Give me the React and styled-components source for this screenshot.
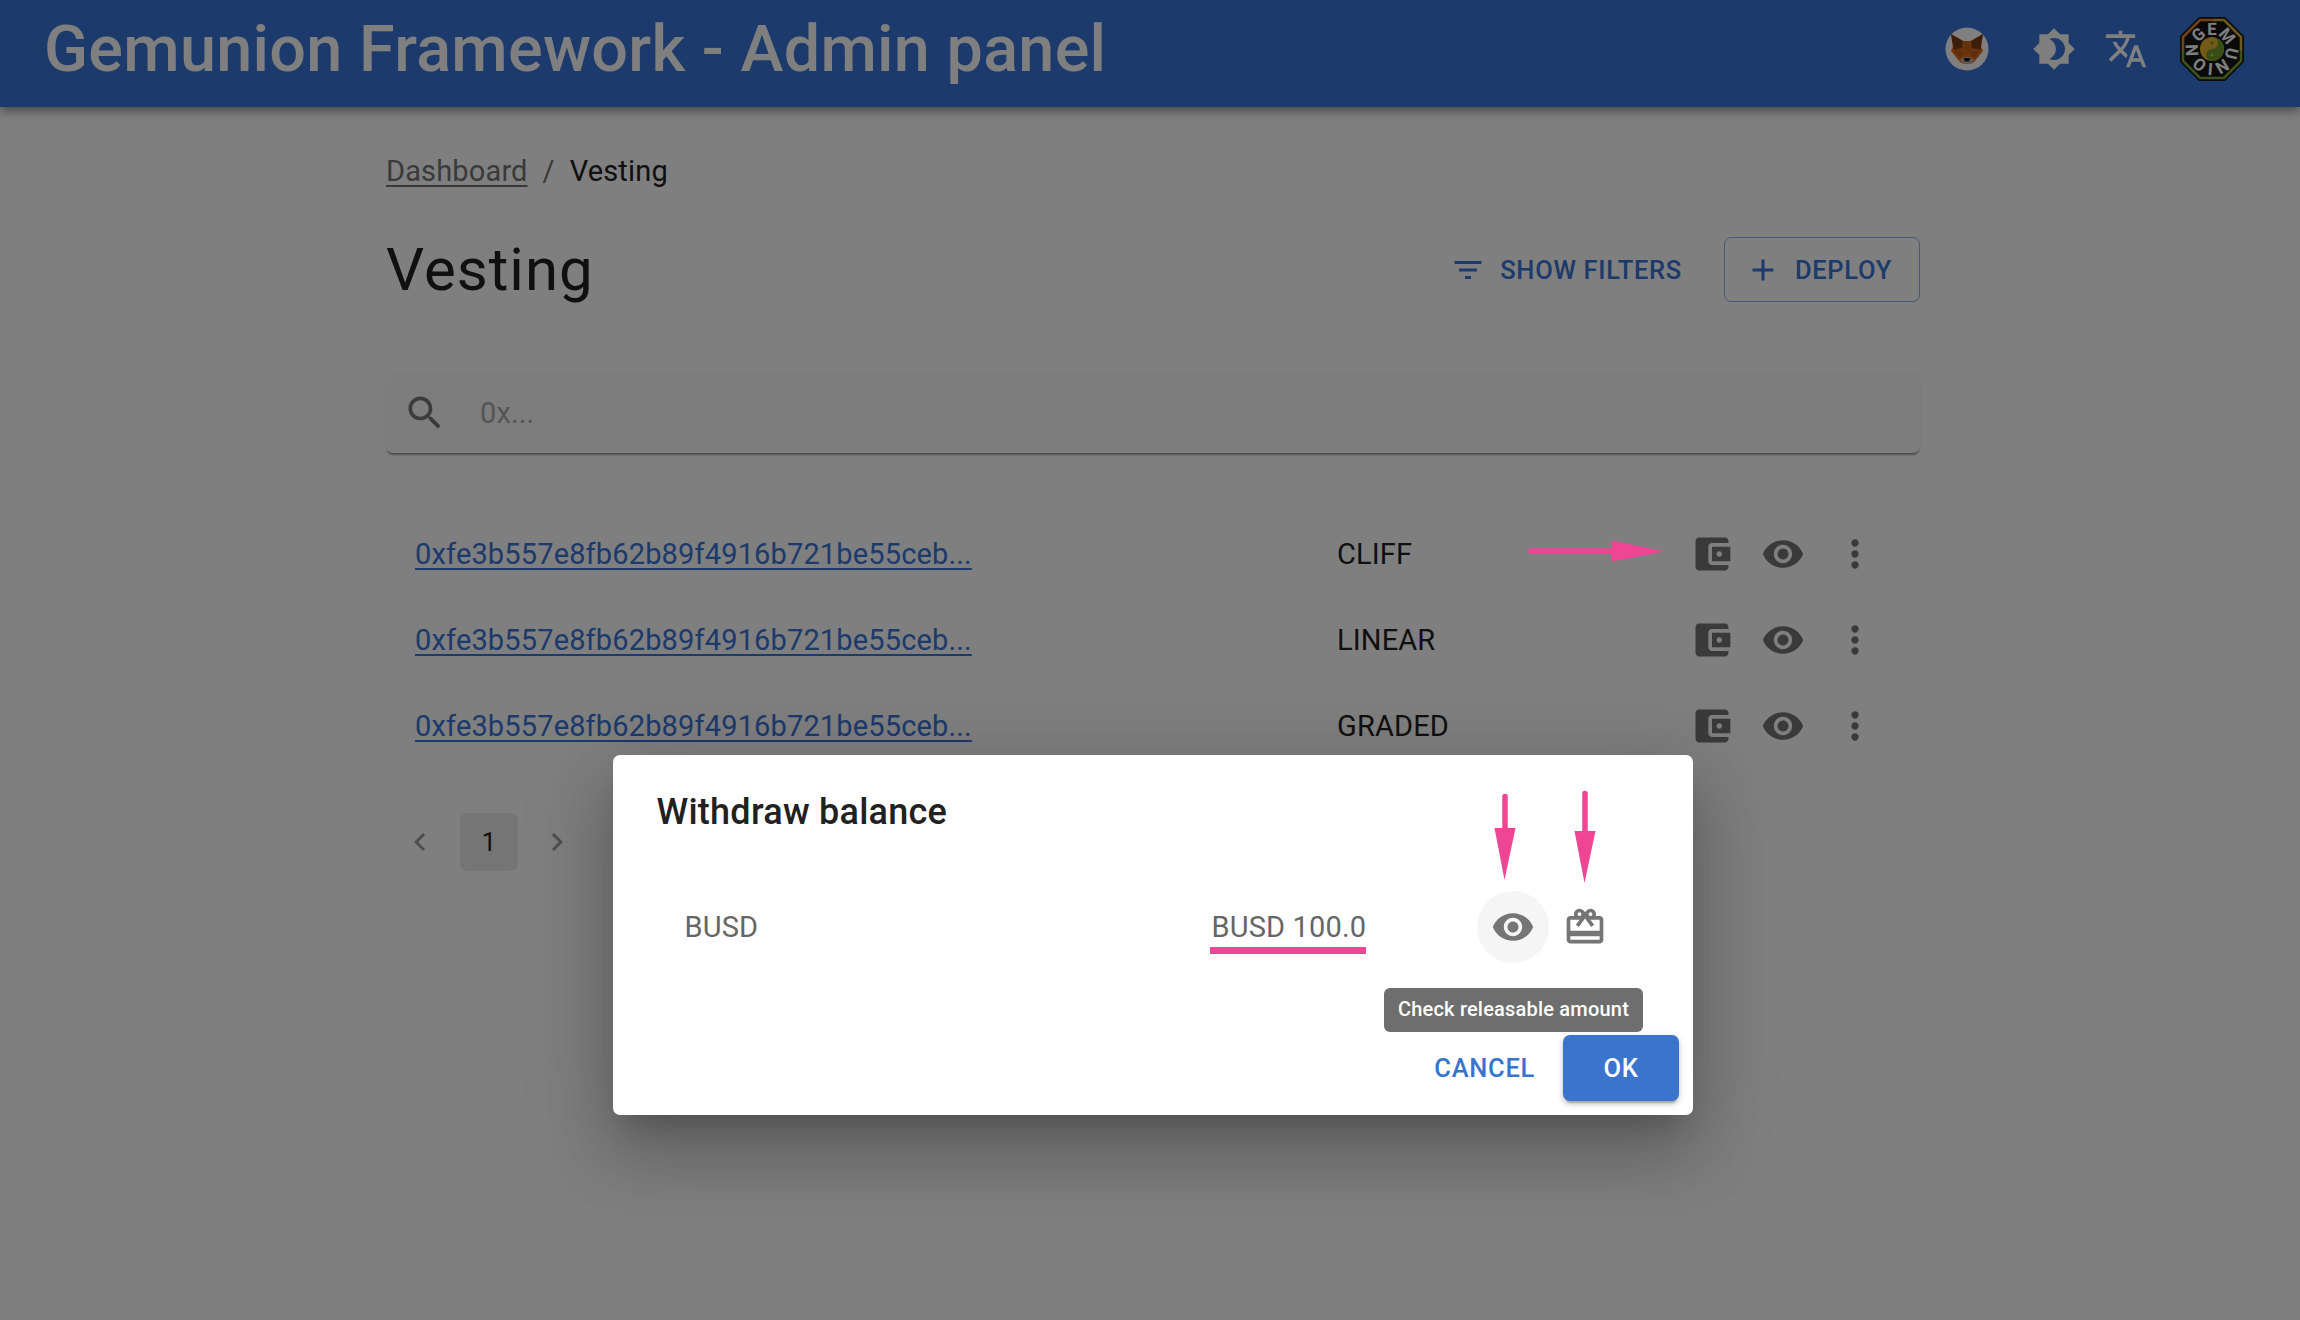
import React from "react";
import styled, { createGlobalStyle } from "styled-components";

const Global = createGlobalStyle`
  html, body { margin: 0; padding: 0; background: #fff; overflow: hidden; }
  body { font-family: Roboto, "Liberation Sans", sans-serif; width: 2300px; height: 1320px; }
  * { box-sizing: border-box; }
`;

const ICONS = {
  wallet: "M21 18v1c0 1.1-.9 2-2 2H5c-1.11 0-2-.9-2-2V5c0-1.1.89-2 2-2h14c1.1 0 2 .9 2 2v1h-9c-1.11 0-2 .9-2 2v8c0 1.1.89 2 2 2h9zm-9-2h10V8H12v8zm4-2.5c-.83 0-1.5-.67-1.5-1.5s.67-1.5 1.5-1.5 1.5.67 1.5 1.5-.67 1.5-1.5 1.5z",
  eye: "M12 4.5C7 4.5 2.73 7.61 1 12c1.73 4.39 6 7.5 11 7.5s9.27-3.11 11-7.5c-1.73-4.39-6-7.5-11-7.5zM12 17c-2.76 0-5-2.24-5-5s2.24-5 5-5 5 2.24 5 5-2.24 5-5 5zm0-8c-1.66 0-3 1.34-3 3s1.34 3 3 3 3-1.34 3-3-1.34-3-3-3z",
  more: "M12 8c1.1 0 2-.9 2-2s-.9-2-2-2-2 .9-2 2 .9 2 2 2zm0 2c-1.1 0-2 .9-2 2s.9 2 2 2 2-.9 2-2-.9-2-2-2zm0 6c-1.1 0-2 .9-2 2s.9 2 2 2 2-.9 2-2-.9-2-2-2z",
  gift: "M20 6h-2.18c.11-.31.18-.65.18-1 0-1.66-1.34-3-3-3-1.05 0-1.96.54-2.5 1.35l-.5.67-.5-.68C10.96 2.54 10.05 2 9 2 7.34 2 6 3.34 6 5c0 .35.07.69.18 1H4c-1.11 0-1.99.89-1.99 2L2 19c0 1.11.89 2 2 2h16c1.11 0 2-.89 2-2V8c0-1.11-.89-2-2-2zm-5-2c.55 0 1 .45 1 1s-.45 1-1 1-1-.45-1-1 .45-1 1-1zM9 4c.55 0 1 .45 1 1s-.45 1-1 1-1-.45-1-1 .45-1 1-1zm11 15H4v-2h16v2zm0-5H4V8h5.08L7 10.83 8.62 12 11 8.76l1-1.36 1 1.36L15.38 12 17 10.83 14.92 8H20v6z",
  theme: "M20 8.69V4h-4.69L12 .69 8.69 4H4v4.69L.69 12 4 15.31V20h4.69L12 23.31 15.31 20H20v-4.69L23.31 12 20 8.69zM12 18c-.89 0-1.74-.2-2.5-.55C11.56 16.5 13 14.42 13 12s-1.44-4.5-3.5-5.45C10.26 6.2 11.11 6 12 6c3.31 0 6 2.69 6 6s-2.69 6-6 6z",
  translate: "M12.87 15.07l-2.54-2.51.03-.03c1.74-1.94 2.98-4.17 3.64-6.53H17V4h-7V2H8v2H1v1.99h11.17C11.5 7.92 10.44 9.75 9 11.35 8.07 10.32 7.3 9.19 6.69 8h-2c.73 1.63 1.73 3.17 2.98 4.56l-5.09 5.02L4 19l5-5 3.11 3.11.76-2.04zM18.5 10h-2L12 22h2l1.12-3h4.75L21 22h2l-4.5-12zm-2.62 7l1.62-4.33L19.12 17h-3.24z",
  search: "M15.5 14h-.79l-.28-.27C15.41 12.59 16 11.11 16 9.5 16 5.91 13.09 3 9.5 3S3 5.91 3 9.5 5.91 16 9.5 16c1.61 0 3.09-.59 4.23-1.57l.27.28v.79l5 4.99L20.49 19l-4.99-5zm-6 0C7.01 14 5 11.99 5 9.5S7.01 5 9.5 5 14 7.01 14 9.5 11.99 14 9.5 14z",
  filter: "M10 18h4v-2h-4v2zM3 6v2h18V6H3zm3 7h12v-2H6v2z",
  plus: "M19 13h-6v6h-2v-6H5v-2h6V5h2v6h6v2z",
  left: "M15.41 7.41 14 6l-6 6 6 6 1.41-1.41L10.83 12z",
  right: "M10 6 8.59 7.41 13.17 12l-4.58 4.59L10 18l6-6z",
};

const Svg = styled.svg`
  display: block;
  flex: none;
  width: ${(p) => p.$size || 44}px;
  height: ${(p) => p.$size || 44}px;
  fill: currentColor;
`;
const Icon = ({ name, size }) => (
  <Svg viewBox="0 0 24 24" $size={size}>
    <path d={ICONS[name]} />
  </Svg>
);

const Page = styled.div`
  position: relative;
  width: 2300px;
  height: 1320px;
  background: #fff;
  overflow: hidden;
`;
const AppBar = styled.header`
  display: flex;
  align-items: center;
  height: 107px;
  padding: 0 38px 9px 44px;
  background: #3874d6;
  color: #fff;
  box-shadow: 0 4px 8px -1px rgba(0, 0, 0, 0.3), 0 7px 10px 0 rgba(0, 0, 0, 0.14);
`;
const AppTitle = styled.h1`
  flex: 1;
  margin: 0;
  font-size: 64.7px;
  font-weight: 500;
  line-height: 96px;
  letter-spacing: 0.3px;
`;
const AppActions = styled.div`
  display: flex;
  align-items: center;
`;
const BarSlot = styled.div`
  display: flex;
  align-items: center;
  justify-content: center;
  width: ${(p) => p.$w}px;
  margin-left: ${(p) => p.$gap || 0}px;
`;

const Content = styled.main`
  width: 1534px;
  margin-left: 386px;
`;
const Breadcrumbs = styled.nav`
  display: flex;
  align-items: center;
  gap: 15px;
  height: 44px;
  margin-top: 42px;
  font-size: 29px;
  letter-spacing: 0.15px;
  color: #212121;
`;
const Crumb = styled.a`
  color: #757575;
  text-decoration: underline;
  text-underline-offset: 4px;
  text-decoration-thickness: 2px;
`;
const Sep = styled.span`
  color: #757575;
`;
const Header = styled.div`
  display: flex;
  align-items: center;
  height: 65px;
  margin-top: 44px;
`;
const PageTitle = styled.h2`
  flex: 1;
  margin: 0;
  font-size: 60px;
  font-weight: 400;
  line-height: 65px;
  letter-spacing: 1px;
  color: #212121;
`;
const TextButton = styled.button`
  display: flex;
  align-items: center;
  gap: 14px;
  height: 65px;
  border: 1.5px solid ${(p) => (p.$outlined ? "#8db0e8" : "transparent")};
  border-radius: 7px;
  background: none;
  padding: 0 ${(p) => (p.$outlined ? 27 : 28)}px 0 ${(p) => (p.$outlined ? 20 : 28)}px;
  margin-left: ${(p) => (p.$outlined ? 13 : 0)}px;
  color: #3874d6;
  font: 500 25.5px Roboto, sans-serif;
  letter-spacing: 0.7px;
  text-transform: uppercase;
`;
const Search = styled.div`
  display: flex;
  align-items: center;
  height: 80px;
  margin-top: 71px;
  padding-left: 17px;
  background: #fbfbfb;
  border-radius: 7px;
  box-shadow: 0 3px 2px -1px rgba(0, 0, 0, 0.4), 0 0 2px rgba(0, 0, 0, 0.05);
  color: #777;
`;
const SearchText = styled.span`
  margin-left: 33px;
  font-size: 29px;
  color: #aaa;
  letter-spacing: 0.15px;
`;
const Rows = styled.div`
  margin-top: 58px;
`;
const Row = styled.div`
  display: flex;
  align-items: center;
  height: 86px;
  padding-left: 29px;
  font-size: 29px;
  letter-spacing: 0.15px;
  color: #212121;
`;
const RowLink = styled.a`
  width: 922px;
  color: #3874d6;
  text-decoration: underline;
  text-underline-offset: 4px;
  text-decoration-thickness: 2px;
`;
const RowType = styled.span`
  width: 339px;
`;
const IconBtn = styled.span`
  display: flex;
  align-items: center;
  justify-content: center;
  width: 72px;
  height: 72px;
  border-radius: 50%;
  color: #757575;
  background: ${(p) => (p.$active ? "#f5f5f5" : "transparent")};
  margin-right: ${(p) => (p.$tight ? -0.7 : 0)}px;
`;
const Pager = styled.div`
  display: flex;
  align-items: center;
  gap: 11px;
  margin: 43.5px 0 0 5px;
`;
const PagerItem = styled.span`
  display: flex;
  align-items: center;
  justify-content: center;
  width: 58px;
  height: 58px;
  border-radius: 7px;
  font-size: 25.5px;
  color: #212121;
  background: ${(p) => (p.$active ? "#ebebeb" : "transparent")};
`;
const PagerArrow = styled(PagerItem)`
  color: #9e9e9e;
  margin-left: ${(p) => (p.$prev ? 0 : -1.5)}px;
`;

const Backdrop = styled.div`
  position: absolute;
  inset: 0;
  background: rgba(0, 0, 0, 0.5);
`;
const Dialog = styled.section`
  position: absolute;
  left: 613px;
  top: 755px;
  width: 1080px;
  height: 360px;
  display: flex;
  flex-direction: column;
  background: #fff;
  border-radius: 7px;
  box-shadow: 0 20px 28px -13px rgba(0, 0, 0, 0.2), 0 44px 68px 5px rgba(0, 0, 0, 0.14), 0 16px 84px 15px rgba(0, 0, 0, 0.12);
`;
const DialogTitle = styled.h3`
  margin: 34px 0 0 43.5px;
  font-size: 36px;
  font-weight: 500;
  line-height: 46px;
  letter-spacing: 0.25px;
  color: #212121;
`;
const DialogRow = styled.div`
  display: flex;
  align-items: center;
  height: 72px;
  margin-top: 56px;
  padding-left: 71.5px;
  font-size: 29px;
  letter-spacing: 0.15px;
  color: #666;
`;
const RowLabel = styled.span`
  width: 527px;
`;
const RowValue = styled.span`
  position: relative;
  width: 265.5px;
`;
const Highlight = styled.i`
  position: absolute;
  left: -2px;
  top: 37px;
  width: 156px;
  height: 7px;
  background: #ee4595;
`;
const Tooltip = styled.div`
  position: absolute;
  left: 771px;
  top: 233px;
  width: 259px;
  height: 44px;
  padding-bottom: 2px;
  display: flex;
  align-items: center;
  justify-content: center;
  border-radius: 6px;
  background: #6e6e6e;
  color: #fff;
  font-size: 20px;
  font-weight: 500;
  letter-spacing: 0.2px;
`;
const DialogActions = styled.div`
  display: flex;
  align-items: center;
  justify-content: flex-end;
  gap: 28px;
  margin-top: 72px;
  padding-right: 14px;
`;
const Cancel = styled.button`
  border: 0;
  padding: 0;
  background: none;
  color: #3874cc;
  font: 500 25.5px Roboto, sans-serif;
  letter-spacing: 0.7px;
`;
const Ok = styled.button`
  width: 116px;
  height: 66px;
  border: 0;
  border-radius: 7px;
  background: #3a74cc;
  color: #fff;
  font: 500 25.5px Roboto, sans-serif;
  letter-spacing: 0.7px;
  box-shadow: 0 5px 2px -3px rgba(0, 0, 0, 0.2), 0 3px 5px 0 rgba(0, 0, 0, 0.14), 0 2px 9px 0 rgba(0, 0, 0, 0.12);
`;
const ArrowSvg = styled.svg`
  position: absolute;
  left: ${(p) => p.$x}px;
  top: ${(p) => p.$y}px;
  overflow: visible;
`;
const DownArrow = ({ x, y, len }) => (
  <ArrowSvg $x={x} $y={y} width="22" height={len} viewBox={`0 0 22 ${len}`}>
    <path d={`M11 2.5V${len - 40}`} stroke="#ee4595" strokeWidth="5.5" strokeLinecap="round" />
    <polygon points={`0.5,${len - 52} 21.5,${len - 52} 10.5,${len}`} fill="#ee4595" />
  </ArrowSvg>
);

const Fox = () => (
  <svg width="44" height="44" viewBox="0 0 44 44">
    <circle cx="22" cy="22" r="21.5" fill="#fff" />
    <polygon points="6,7 18,14 26,14 38,7 36,19 38,24 29,35 25,37 19,37 15,35 6,24 8,19" fill="#dd6a18" />
    <polygon points="6,7 18,14 17,21 9,23 8,19" fill="#7c3d12" />
    <polygon points="38,7 26,14 27,21 35,23 36,19" fill="#7c3d12" />
    <polygon points="18,14 26,14 27,21 24,27 20,27 17,21" fill="#c9641a" />
    <polygon points="9,23 19,25 15,31" fill="#b85c18" />
    <polygon points="35,23 25,25 29,31" fill="#b85c18" />
    <polygon points="15,33 19,30 25,30 29,33 25,37 19,37" fill="#c2b1a3" />
    <polygon points="18.5,31 25.5,31 24,34.5 20,34.5" fill="#141414" />
  </svg>
);

const LogoText = styled.text`
  font: 700 17px Roboto, sans-serif;
  fill: #fff;
`;
const Logo = () => (
  <svg width="66" height="66" viewBox="0 0 66 66">
    <polygon points="20,1 46,1 65,20 65,46 46,65 20,65 1,46 1,20" fill="#141414" />
    <g fill="none" strokeWidth="2.6">
      <polyline points="4,34 4,21 21,4 34,4" stroke="#e8822a" />
      <polyline points="34,4 45,4 62,21 62,34" stroke="#d9b23a" />
      <polyline points="62,34 62,45 45,62 21,62 4,45 4,34" stroke="#7da232" />
    </g>
    <defs>
      <path id="logo-ring" d="M33 33m-14 0a14 14 0 1 1 28 0a14 14 0 1 1 -28 0" transform="rotate(23 33 33)" />
    </defs>
    <LogoText>
      <textPath href="#logo-ring" textLength="87" lengthAdjust="spacingAndGlyphs">GEMUNION</textPath>
    </LogoText>
    <circle cx="33" cy="33" r="12" fill="#e9b52e" />
    <path d="M33 21a12 12 0 0 1 0 24a6 6 0 0 1 0-12a6 6 0 0 0 0-12z" fill="#6f9a2e" />
    <circle cx="33" cy="27" r="1.5" fill="#6f9a2e" />
    <circle cx="33" cy="39" r="1.5" fill="#e9b52e" />
  </svg>
);

const rows = ["CLIFF", "LINEAR", "GRADED"];

export default function App() {
  return (
    <>
      <Global />
      <Page>
        <AppBar>
          <AppTitle>Gemunion Framework - Admin panel</AppTitle>
          <AppActions>
            <BarSlot $w={72}><Fox /></BarSlot>
            <BarSlot $w={72} $gap={15}><Icon name="theme" /></BarSlot>
            <BarSlot $w={72}><Icon name="translate" /></BarSlot>
            <BarSlot $w={100}><Logo /></BarSlot>
          </AppActions>
        </AppBar>
        <Content>
          <Breadcrumbs>
            <Crumb>Dashboard</Crumb>
            <Sep>/</Sep>
            <span>Vesting</span>
          </Breadcrumbs>
          <Header>
            <PageTitle>Vesting</PageTitle>
            <TextButton>
              <Icon name="filter" size={36} />
              Show filters
            </TextButton>
            <TextButton $outlined>
              <Icon name="plus" size={36} />
              Deploy
            </TextButton>
          </Header>
          <Search>
            <Icon name="search" />
            <SearchText>0x...</SearchText>
          </Search>
          <Rows>
            {rows.map((r) => (
              <Row key={r}>
                <RowLink>0xfe3b557e8fb62b89f4916b721be55ceb...</RowLink>
                <RowType>{r}</RowType>
                <IconBtn $tight><Icon name="wallet" /></IconBtn>
                <IconBtn $tight><Icon name="eye" /></IconBtn>
                <IconBtn><Icon name="more" /></IconBtn>
              </Row>
            ))}
          </Rows>
          <Pager>
            <PagerArrow $prev><Icon name="left" size={36} /></PagerArrow>
            <PagerItem $active>1</PagerItem>
            <PagerArrow><Icon name="right" size={36} /></PagerArrow>
          </Pager>
        </Content>
        <Backdrop />
        <Dialog>
          <DialogTitle>Withdraw balance</DialogTitle>
          <DialogRow>
            <RowLabel>BUSD</RowLabel>
            <RowValue>
              BUSD 100.0
              <Highlight />
            </RowValue>
            <IconBtn $active><Icon name="eye" /></IconBtn>
            <IconBtn><Icon name="gift" /></IconBtn>
          </DialogRow>
          <DialogActions>
            <Cancel>CANCEL</Cancel>
            <Ok>OK</Ok>
          </DialogActions>
          <Tooltip>Check releasable amount</Tooltip>
          <DownArrow x={881} y={39} len={86} />
          <DownArrow x={961} y={36} len={92} />
        </Dialog>
        <ArrowSvg $x={1527} $y={538} width="140" height="26" viewBox="0 0 140 26">
          <path d="M4 13H90" stroke="#ee4595" strokeWidth="5.5" strokeLinecap="round" />
          <polygon points="85,2.5 85,23.5 138,13.5" fill="#ee4595" />
        </ArrowSvg>
      </Page>
    </>
  );
}
